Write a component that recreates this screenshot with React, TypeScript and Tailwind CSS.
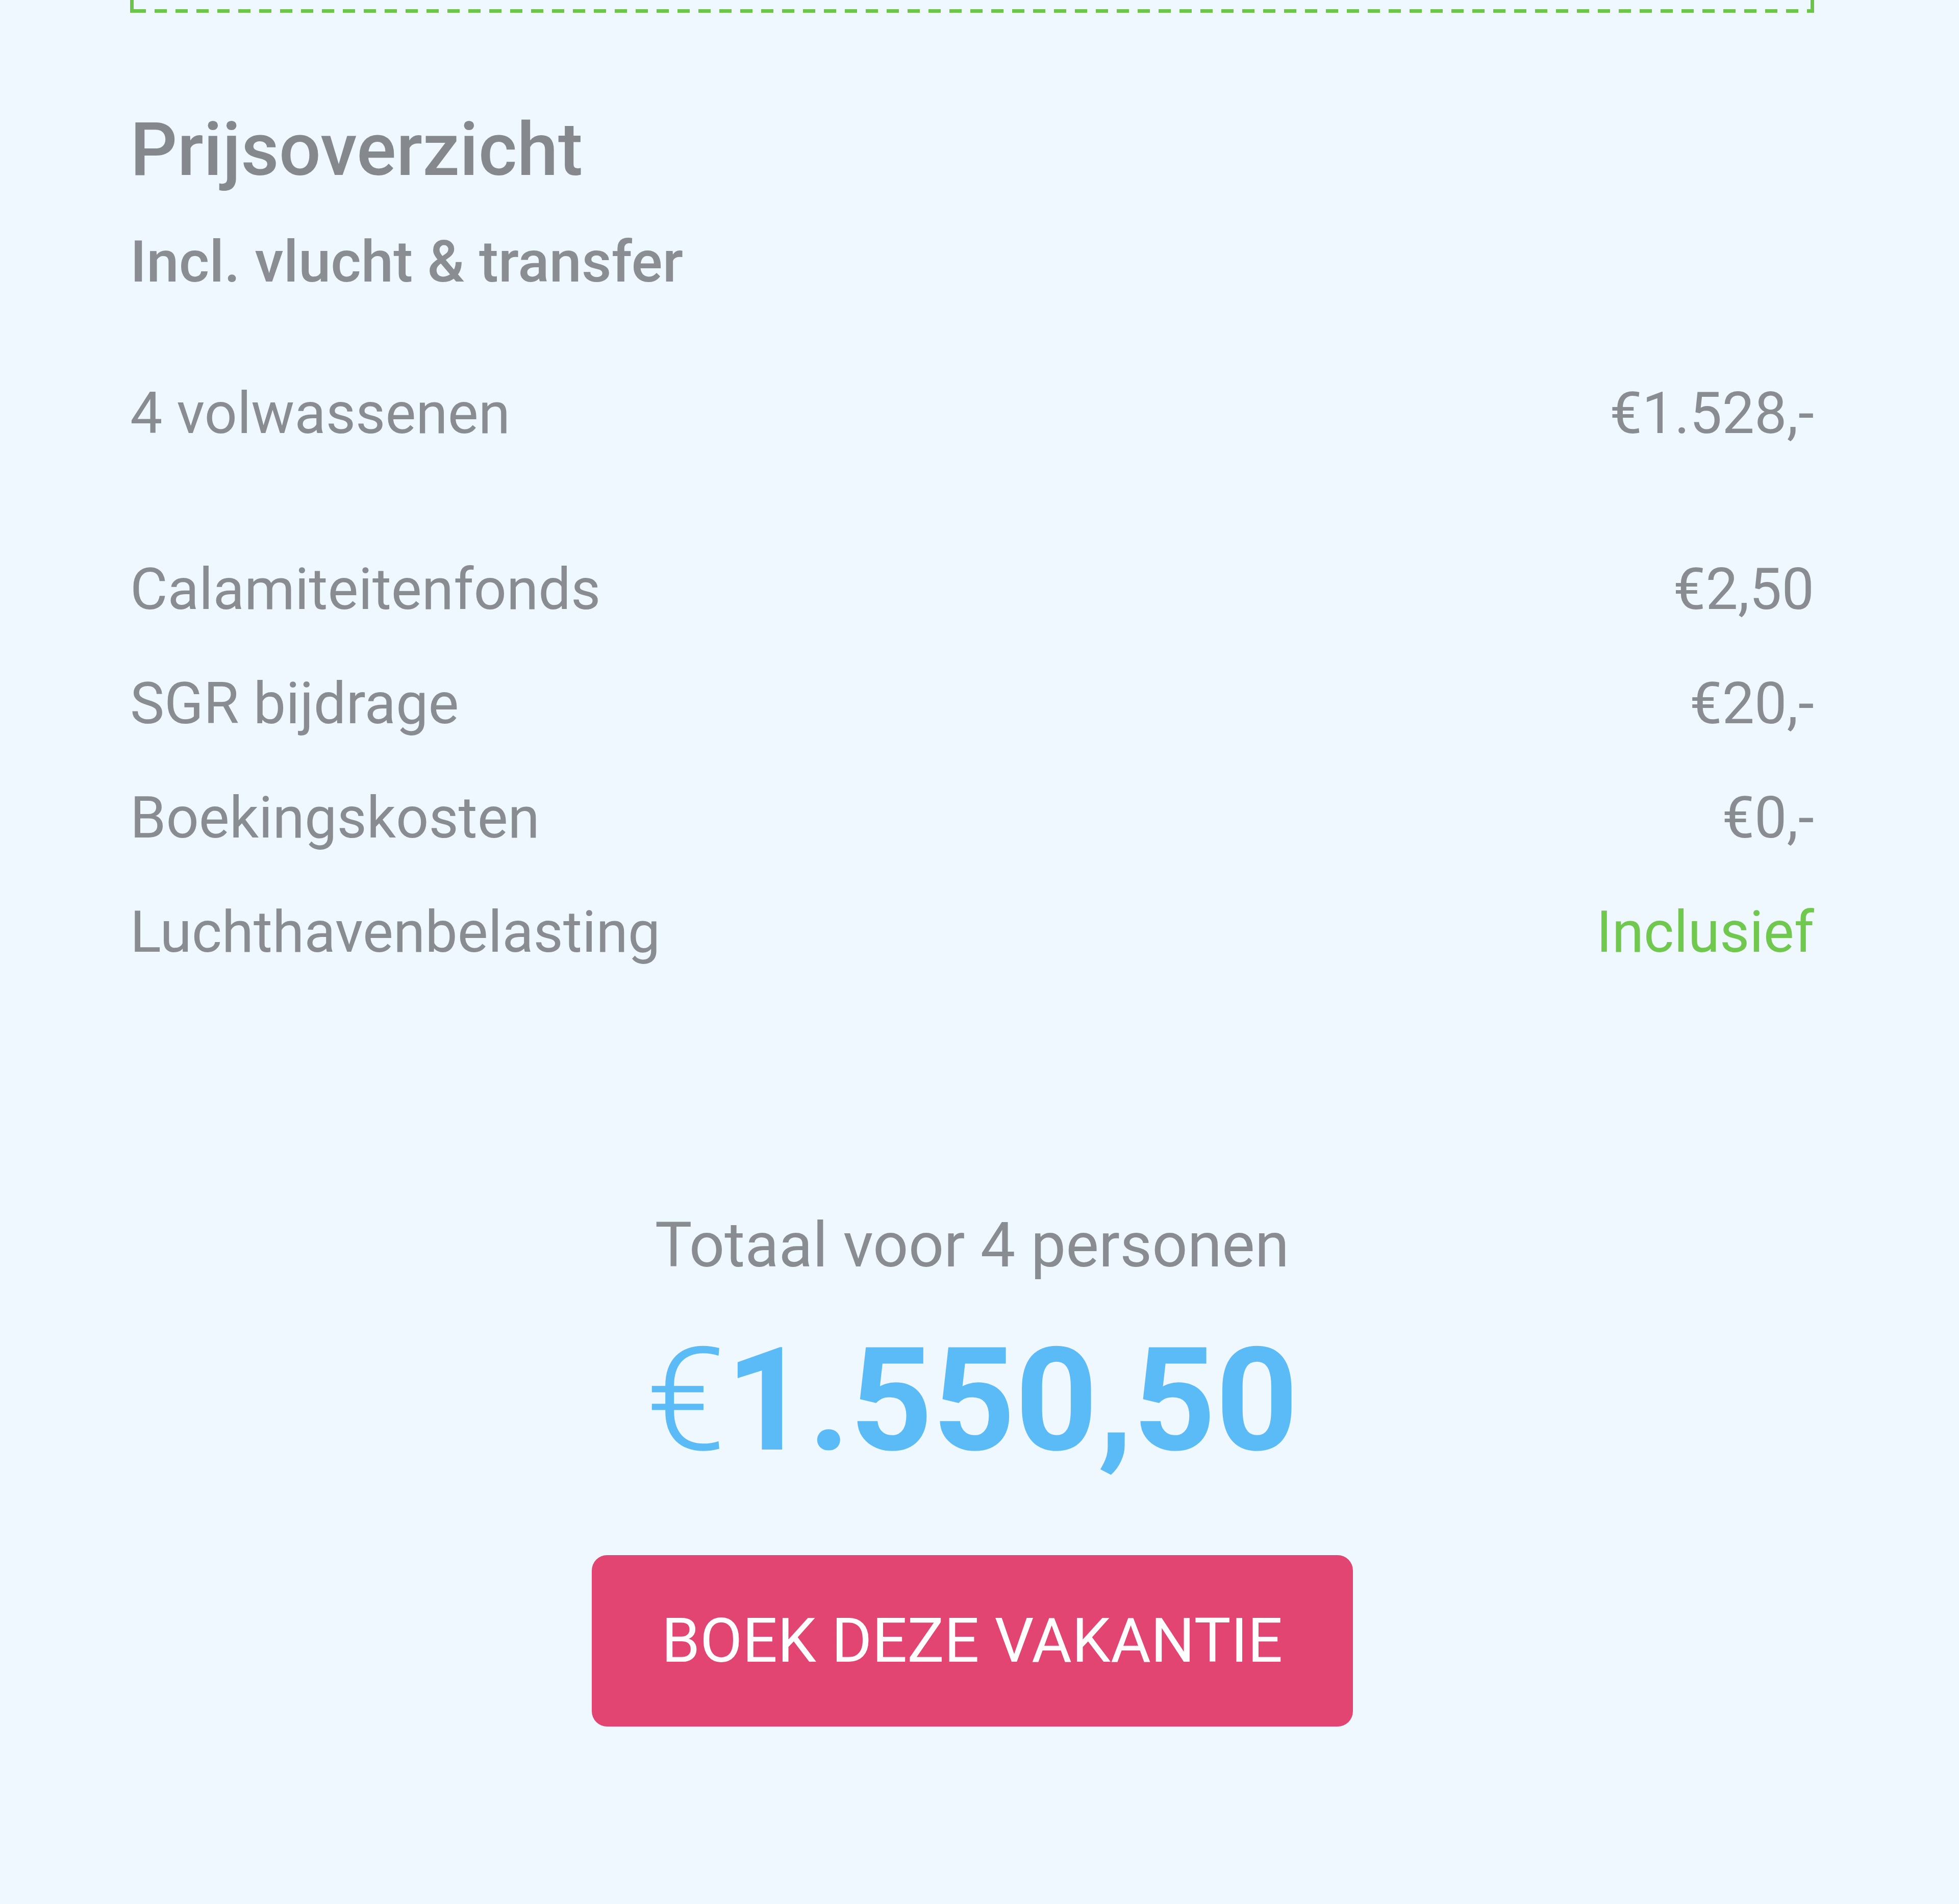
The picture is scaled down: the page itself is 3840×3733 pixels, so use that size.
const rows = [
  { label: 'Calamiteitenfonds', value: '€2,50' },
  { label: 'SGR bijdrage', value: '€20,-' },
  { label: 'Boekingskosten', value: '€0,-' },
  { label: 'Luchthavenbelasting', value: 'Inclusief', green: true },
]

export default function App() {
  return (
    <div className="min-h-[3733px] w-[3840px] bg-[#eff7ff] pl-[255px] pr-[284px] font-['Roboto','Liberation_Sans',sans-serif] text-[#898c90]">
      {/* bottom of the box above, cut off by the viewport */}
      <div className="flex h-[25px] flex-col justify-end border-x-[7px] border-[#6cc449]">
        <div className="h-[7px] bg-[repeating-linear-gradient(to_right,#6cc449_0_24px,transparent_24px_41px)]" />
      </div>

      <h2 className="mt-[196px] text-[145px] leading-none font-medium text-[#85888c]">Prijsoverzicht</h2>
      <p className="mt-[90px] text-[114px] leading-none font-medium text-[#8a8d91]">Incl. vlucht &amp; transfer</p>

      <div className="mt-[184px] flex items-center justify-between text-[113px] leading-none">
        <span>4 volwassenen</span>
        <span>€1.528,-</span>
      </div>

      <div className="mt-[232px] flex flex-col gap-[111px] text-[113px] leading-none">
        {rows.map((row) => (
          <div key={row.label} className="flex items-center justify-between">
            <span>{row.label}</span>
            <span className={row.green ? 'text-[#70c84e]' : ''}>{row.value}</span>
          </div>
        ))}
      </div>

      <div className="mt-[497px] flex flex-col items-center">
        <p className="text-[122px] leading-none">Totaal voor 4 personen</p>
        <p className="mt-[102px] text-[282px] leading-none font-bold text-[#5bbbf7]">
          <span className="font-light">€</span>1.550,50
        </p>
        <button className="mt-[162px] flex h-[336px] w-[1492px] items-center justify-center rounded-[30px] bg-[#e34573] text-[121px] leading-none text-white">
          BOEK DEZE VAKANTIE
        </button>
      </div>
    </div>
  )
}
